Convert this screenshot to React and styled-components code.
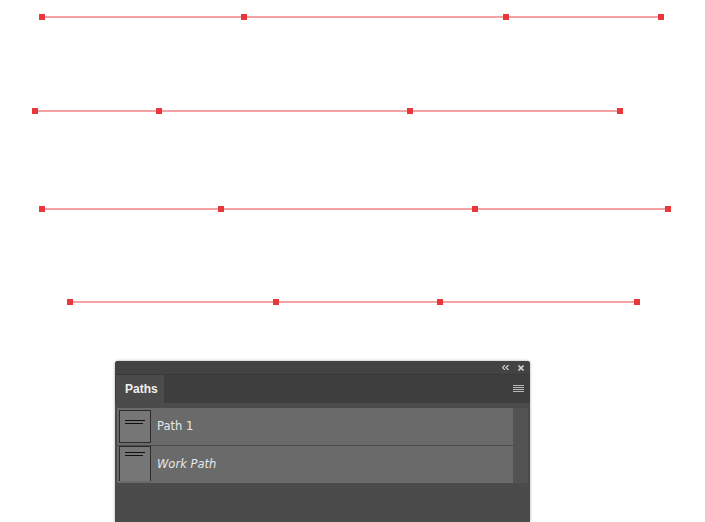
import React from "react";
import styled, { createGlobalStyle } from "styled-components";

const paths = [
  { y: 17, points: [42, 244, 506, 661] },
  { y: 111, points: [35, 159, 410, 620] },
  { y: 209, points: [42, 221, 475, 668] },
  { y: 302, points: [70, 276, 440, 637] },
];

const items = [
  { name: "Path 1", work: false },
  { name: "Work Path", work: true },
];

const GlobalStyle = createGlobalStyle`
  html, body {
    margin: 0;
    padding: 0;
    background: #ffffff;
    font-family: "Liberation Sans", Arial, sans-serif;
  }
`;

const Page = styled.div`
  width: 705px;
  height: 522px;
  overflow: hidden;
  display: flex;
  flex-direction: column;
`;

const Canvas = styled.svg`
  display: block;
  flex: 0 0 361px;
`;

const Panel = styled.div`
  margin-left: 115px;
  width: 415px;
  flex: 1;
  display: flex;
  flex-direction: column;
  background: #4b4b4b;
  border-radius: 3px 3px 0 0;
  box-shadow: 0 0 3px rgba(0, 0, 0, 0.35);
  overflow: hidden;
`;

const TitleBar = styled.div`
  height: 13px;
  background: #434343;
  display: flex;
  align-items: center;
  justify-content: flex-end;
  gap: 9px;
  padding-right: 6px;
  color: #c8c8c8;
`;

const TabRow = styled.div`
  height: 29px;
  background: #3e3e3e;
  display: flex;
  align-items: stretch;
  border-top: 1px solid #383838;
  box-sizing: border-box;
`;

const Tab = styled.div`
  width: 48px;
  margin-left: 1px;
  background: #4b4b4b;
  color: #f0f0f0;
  font-weight: bold;
  font-size: 12px;
  display: flex;
  align-items: center;
  padding-left: 9px;
  box-sizing: border-box;
`;

const TabSpacer = styled.div`
  flex: 1;
  display: flex;
  align-items: center;
  justify-content: flex-end;
  padding-right: 6px;
`;

const Body = styled.div`
  flex: 1;
  display: flex;
  padding-top: 5px;
  background: #4b4b4b;
`;

const List = styled.div`
  flex: 0 0 396px;
  margin-left: 2px;
  display: flex;
  flex-direction: column;
  gap: 1px;
`;

const Track = styled.div`
  flex: 0 0 15px;
  background: #535353;
  height: 75px;
`;

const Row = styled.div`
  height: 37px;
  background: #6a6a6a;
  display: flex;
  align-items: flex-start;
  gap: 6px;
  padding-left: 2px;
`;

const Thumb = styled.div`
  width: 32px;
  height: ${(p) => (p.$work ? "35px" : "33px")};
  margin-top: ${(p) => (p.$work ? "0" : "2px")};
  box-sizing: border-box;
  border: 1px solid #2b2b2b;
  ${(p) => p.$work && "border-bottom: none;"}
  background: #767676;
  display: flex;
  flex-direction: column;
  gap: 2px;
  padding: ${(p) => (p.$work ? "5px" : "9px")} 0 0 5px;
`;

const ThumbLine = styled.span`
  display: block;
  height: 1px;
  width: ${(p) => p.$w}px;
  background: #111;
`;

const Name = styled.span`
  font-family: "DejaVu Sans", "Liberation Sans", sans-serif;
  font-size: 11.5px;
  color: #e8e8e8;
  font-style: ${(p) => (p.$work ? "italic" : "normal")};
  line-height: 37px;
`;

const Chevrons = () => (
  <svg width="7" height="5" viewBox="0 0 7 5">
    <path d="M3 0 L0.5 2.5 L3 5 M6.5 0 L4 2.5 L6.5 5" stroke="#d0d0d0" strokeWidth="1.2" fill="none" />
  </svg>
);

const Close = () => (
  <svg width="6" height="6" viewBox="0 0 6 6">
    <path d="M0.5 0.5 L5.5 5.5 M5.5 0.5 L0.5 5.5" stroke="#d0d0d0" strokeWidth="1.6" />
  </svg>
);

const Menu = () => (
  <svg width="11" height="8" viewBox="0 0 11 8">
    {[0.5, 2.5, 4.5, 6.5].map((y) => (
      <line key={y} x1="0" x2="11" y1={y} y2={y} stroke="#b8b8b8" strokeWidth="1" />
    ))}
  </svg>
);

export default function App() {
  return (
    <Page>
      <GlobalStyle />
      <Canvas width="705" height="361" viewBox="0 0 705 361">
        {paths.map((p) => (
          <g key={p.y}>
            <line
              x1={p.points[0]}
              x2={p.points[p.points.length - 1]}
              y1={p.y}
              y2={p.y}
              stroke="#f5a2a4"
              strokeWidth="2"
            />
            {p.points.map((x) => (
              <rect key={x} x={x - 3} y={p.y - 3} width="6" height="6" fill="#e8383d" />
            ))}
          </g>
        ))}
      </Canvas>
      <Panel>
        <TitleBar>
          <Chevrons />
          <Close />
        </TitleBar>
        <TabRow>
          <Tab>Paths</Tab>
          <TabSpacer>
            <Menu />
          </TabSpacer>
        </TabRow>
        <Body>
          <List>
            {items.map((it) => (
              <Row key={it.name}>
                <Thumb $work={it.work}>
                  <ThumbLine $w={20} />
                  <ThumbLine $w={18} />
                </Thumb>
                <Name $work={it.work}>{it.name}</Name>
              </Row>
            ))}
          </List>
          <Track />
        </Body>
      </Panel>
    </Page>
  );
}
